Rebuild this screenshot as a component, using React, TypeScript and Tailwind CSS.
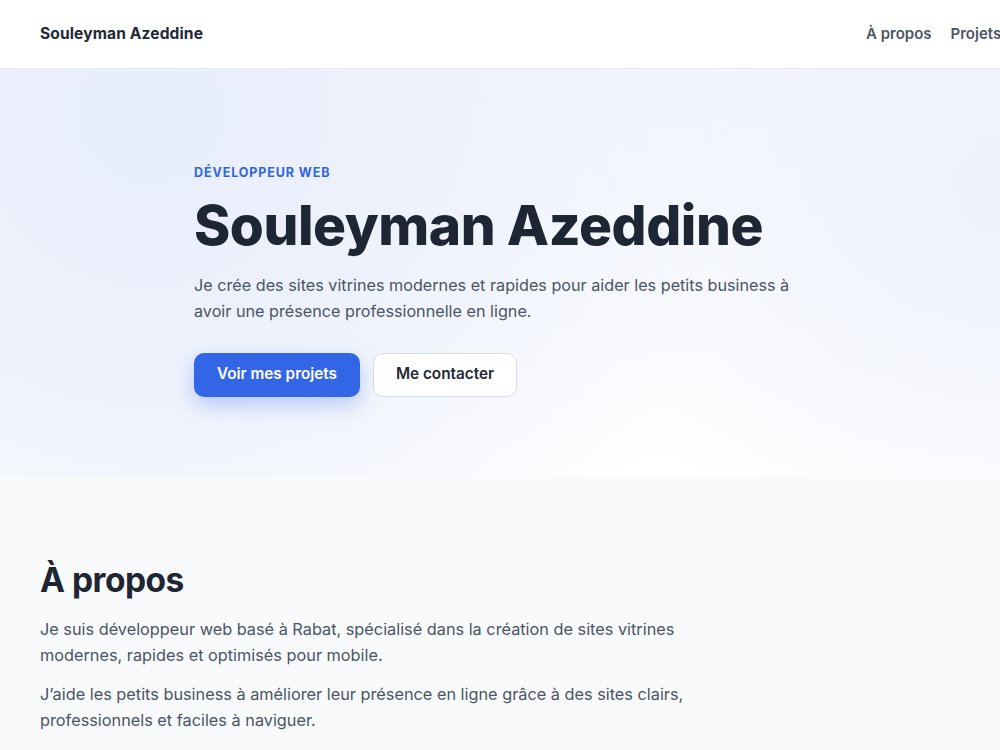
import React from "react";

export default function App() {
  return (
    <div className="w-[1000px] overflow-hidden bg-[#f8fafc] text-[#1f2937]" style={{ fontFamily: "Inter, 'Noto Sans', sans-serif" }}>
      <header className="h-[69px] bg-white border-b border-[#e9ebef] flex items-center justify-between pl-10 whitespace-nowrap">
        <div className="text-[15.6px] font-bold text-[#1f2937] tracking-[0.1px]">Souleyman Azeddine</div>
        <nav className="flex gap-[19px] text-[15px] font-semibold text-[#4b5563] w-[134px] overflow-hidden">
          <a>À propos</a>
          <a>Projets</a>
          <a>Contact</a>
        </nav>
      </header>

      <section className="h-[409px] bg-[radial-gradient(circle_at_15%_10%,#e8edfb_0%,#eef2fc_30%,rgba(255,255,255,0)_65%),radial-gradient(circle_at_100%_30%,#eef2fb_0%,rgba(255,255,255,0)_40%),linear-gradient(180deg,#f3f6fd_0%,#ffffff_100%)] pl-[194px] pt-[95px]">
        <div className="text-[12.5px] font-bold tracking-[0.9px] text-[#2f66e0]">DÉVELOPPEUR WEB</div>
        <h1 className="mt-[10px] text-[55px] leading-[64px] font-extrabold tracking-[-0.45px] text-[#1e2533]">Souleyman Azeddine</h1>
        <p className="mt-[15px] w-[610px] text-[16.2px] leading-[26px] text-[#4b5563]">
          Je crée des sites vitrines modernes et rapides pour aider les petits business à avoir une présence professionnelle en ligne.
        </p>
        <div className="mt-[29px] flex gap-[13px]">
          <button className="h-[44px] w-[166px] rounded-[10px] bg-[#3366e6] text-white text-[15.3px] font-semibold shadow-[0_8px_20px_rgba(51,102,230,0.3)]">Voir mes projets</button>
          <button className="h-[44px] w-[144px] rounded-[10px] bg-white border border-[#d8dce3] text-[#1f2937] text-[15.3px] font-semibold">Me contacter</button>
        </div>
      </section>

      <section className="h-[272px] pl-10 pt-[82px]">
        <h2 className="text-[33.5px] leading-[40px] font-bold tracking-[-0.5px] text-[#1e2533]">À propos</h2>
        <p className="mt-[16px] w-[680px] text-[16.3px] leading-[26px] text-[#4b5563]">
          Je suis développeur web basé à Rabat, spécialisé dans la création de sites vitrines modernes, rapides et optimisés pour mobile.
        </p>
        <p className="mt-[13px] w-[680px] text-[16.3px] leading-[26px] text-[#4b5563]">
          J’aide les petits business à améliorer leur présence en ligne grâce à des sites clairs, professionnels et faciles à naviguer.
        </p>
      </section>
    </div>
  );
}
